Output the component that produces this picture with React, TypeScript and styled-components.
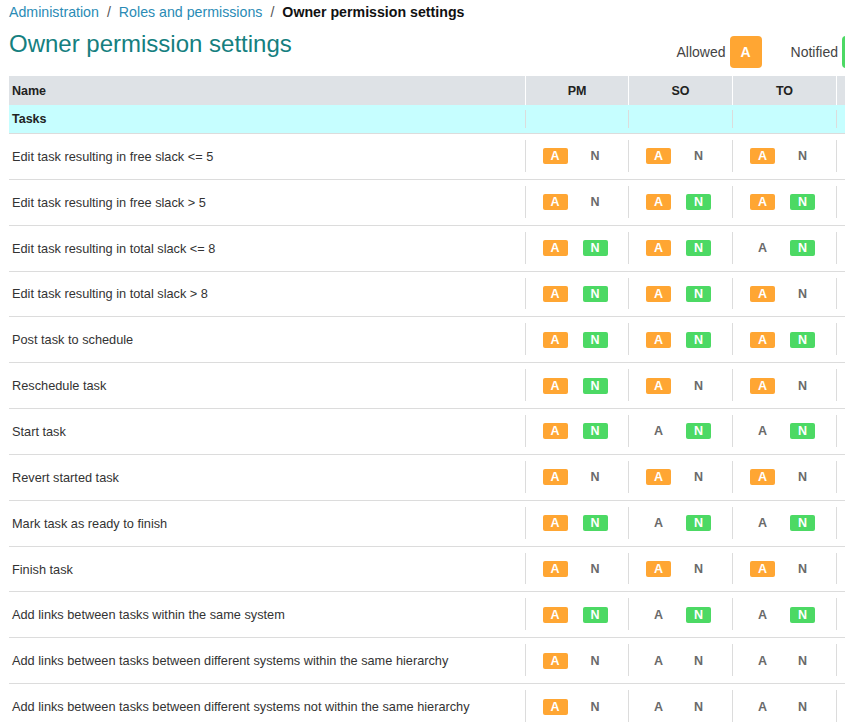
import React from "react";
import styled, { createGlobalStyle } from "styled-components";

const Global = createGlobalStyle`
  html, body { margin: 0; padding: 0; overflow: hidden; background: #fff; }
  body { font-family: "Liberation Sans", Arial, sans-serif; color: #333; }
`;

const Page = styled.div`
  padding: 0 0 0 9px;
  width: 940px;
`;

const Breadcrumb = styled.nav`
  height: 24px;
  display: flex;
  align-items: center;
  font-size: 14.2px;
  gap: 8px;
`;

const Crumb = styled.a`
  color: #2a8bb5;
  text-decoration: none;
`;

const Sep = styled.span`
  color: #555;
`;

const Current = styled.span`
  color: #111;
  font-weight: bold;
`;

const TitleRow = styled.div`
  height: 52px;
  display: flex;
  justify-content: space-between;
  align-items: flex-start;
  width: 865px;
`;

const Title = styled.h1`
  margin: 5px 0 0 0;
  font-size: 24px;
  font-weight: normal;
  color: #157f80;
  line-height: 30px;
`;

const Legend = styled.div`
  display: flex;
  align-items: center;
  margin-top: 12px;
  gap: 29px;
`;

const LegendItem = styled.div`
  display: flex;
  align-items: center;
  gap: 4px;
  font-size: 14px;
  color: #444;
`;

const LegendBadge = styled.span<{ $kind: "A" | "N" }>`
  width: 32px;
  height: 32px;
  border-radius: 4px;
  background: ${(p) => (p.$kind === "A" ? "#ffa633" : "#4cd964")};
  color: #fff;
  font-weight: bold;
  font-size: 14px;
  display: flex;
  align-items: center;
  justify-content: center;
`;

const Table = styled.div`
  width: 932px;
`;

const cols = "516px 103px repeat(3, 104px)";

const HeaderRow = styled.div`
  display: grid;
  grid-template-columns: ${cols};
  height: 29px;
  background: #dee2e6;
  color: #222;
`;

const HeadCell = styled.div<{ $center?: boolean }>`
  display: flex;
  align-items: center;
  justify-content: ${(p) => (p.$center ? "center" : "flex-start")};
  padding-left: ${(p) => (p.$center ? "0" : "3px")};
  border-left: ${(p) => (p.$center ? "1px solid #fff" : "none")};
  font-family: "Liberation Sans", Arial, sans-serif;
  font-weight: bold;
  font-size: 12.5px;
`;

const Row = styled.div<{ $group?: boolean }>`
  display: grid;
  grid-template-columns: ${cols};
  height: ${(p) => (p.$group ? "29px" : "45.85px")};
  box-sizing: border-box;
  border-bottom: 1px solid #dcdcdc;
  background: ${(p) => (p.$group ? "#c6feff" : "#fff")};
`;

const NameCell = styled.div<{ $group?: boolean }>`
  display: flex;
  align-items: center;
  padding-left: 3px;
  font-size: ${(p) => (p.$group ? "12.5px" : "12.75px")};
  font-weight: ${(p) => (p.$group ? "bold" : "normal")};
  color: ${(p) => (p.$group ? "#222" : "#333")};
`;

const RoleCell = styled.div<{ $group?: boolean }>`
  display: flex;
  align-items: center;
  justify-content: center;
  gap: 15px;
  padding-right: 3px;
  position: relative;
  &::before {
    content: "";
    position: absolute;
    left: 0;
    top: ${(p) => (p.$group ? "5px" : "6px")};
    bottom: ${(p) => (p.$group ? "5px" : "7px")};
    width: 1px;
    background: #dcdcdc;
  }
`;

const Badge = styled.span<{ $kind: "A" | "N"; $on: boolean }>`
  width: 25px;
  height: 16px;
  border-radius: 2px;
  display: flex;
  align-items: center;
  justify-content: center;
  font-weight: bold;
  font-size: 12.5px;
  background: ${(p) =>
    p.$on ? (p.$kind === "A" ? "#ffa633" : "#4cd964") : "transparent"};
  color: ${(p) => (p.$on ? "#fff" : "#6a6a6a")};
`;

type Perm = [number, number];
type Item = { name: string; perms: Perm[] };

const items: Item[] = [
  { name: "Edit task resulting in free slack <= 5", perms: [[1, 0], [1, 0], [1, 0], [1, 0]] },
  { name: "Edit task resulting in free slack > 5", perms: [[1, 0], [1, 1], [1, 1], [1, 1]] },
  { name: "Edit task resulting in total slack <= 8", perms: [[1, 1], [1, 1], [0, 1], [0, 1]] },
  { name: "Edit task resulting in total slack > 8", perms: [[1, 1], [1, 1], [1, 0], [1, 0]] },
  { name: "Post task to schedule", perms: [[1, 1], [1, 1], [1, 1], [1, 1]] },
  { name: "Reschedule task", perms: [[1, 1], [1, 0], [1, 0], [1, 0]] },
  { name: "Start task", perms: [[1, 1], [0, 1], [0, 1], [0, 1]] },
  { name: "Revert started task", perms: [[1, 0], [1, 0], [1, 0], [1, 0]] },
  { name: "Mark task as ready to finish", perms: [[1, 1], [0, 1], [0, 1], [0, 1]] },
  { name: "Finish task", perms: [[1, 0], [1, 0], [1, 0], [1, 0]] },
  { name: "Add links between tasks within the same system", perms: [[1, 1], [0, 1], [0, 1], [0, 1]] },
  { name: "Add links between tasks between different systems within the same hierarchy", perms: [[1, 0], [0, 0], [0, 0], [0, 0]] },
  { name: "Add links between tasks between different systems not within the same hierarchy", perms: [[1, 0], [0, 0], [0, 0], [0, 0]] },
];

const roles = ["PM", "SO", "TO", "TM"];

export default function App() {
  return (
    <>
      <Global />
      <Page>
        <Breadcrumb>
          <Crumb href="#">Administration</Crumb>
          <Sep>/</Sep>
          <Crumb href="#">Roles and permissions</Crumb>
          <Sep>/</Sep>
          <Current>Owner permission settings</Current>
        </Breadcrumb>
        <TitleRow>
          <Title>Owner permission settings</Title>
          <Legend>
            <LegendItem>
              Allowed <LegendBadge $kind="A">A</LegendBadge>
            </LegendItem>
            <LegendItem>
              Notified <LegendBadge $kind="N">N</LegendBadge>
            </LegendItem>
          </Legend>
        </TitleRow>
        <Table>
          <HeaderRow>
            <HeadCell>Name</HeadCell>
            {roles.map((r) => (
              <HeadCell key={r} $center>
                {r}
              </HeadCell>
            ))}
          </HeaderRow>
          <Row $group>
            <NameCell $group>Tasks</NameCell>
            {roles.map((r) => (
              <RoleCell key={r} $group />
            ))}
          </Row>
          {items.map((it) => (
            <Row key={it.name}>
              <NameCell>{it.name}</NameCell>
              {it.perms.map(([a, n], i) => (
                <RoleCell key={i}>
                  <Badge $kind="A" $on={!!a}>A</Badge>
                  <Badge $kind="N" $on={!!n}>N</Badge>
                </RoleCell>
              ))}
            </Row>
          ))}
        </Table>
      </Page>
    </>
  );
}
